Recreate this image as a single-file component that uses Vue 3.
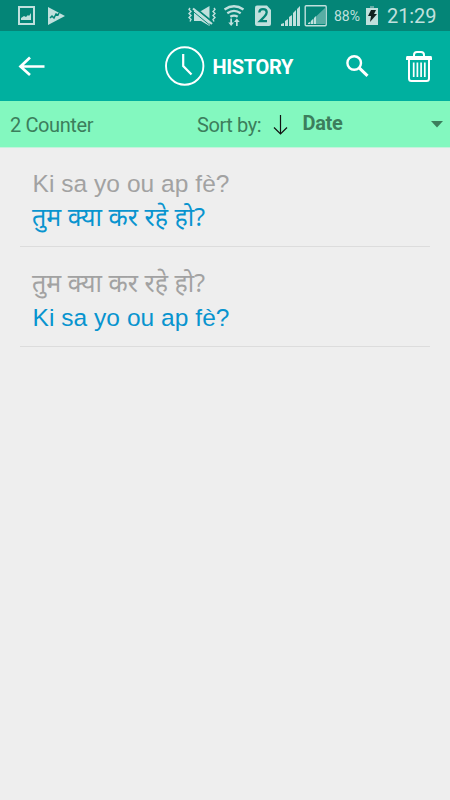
<script setup>
const entries = [
  { source: 'Ki sa yo ou ap fè?', target: 'तुम क्या कर रहे हो?', sourceLang: 'ht', targetLang: 'hi' },
  { source: 'तुम क्या कर रहे हो?', target: 'Ki sa yo ou ap fè?', sourceLang: 'hi', targetLang: 'ht' }
]
</script>

<template>
  <main class="screen">
    <header class="status">
      <svg class="status-left" width="80" height="31" viewBox="0 0 80 31">
        <path class="soft" fill-rule="evenodd" d="M18 6h17v19H18zM20 8v15h13V8z" />
        <path class="soft" d="M21 20v-2l3-2 2 1 2-2 1 1 2-3v7z" />
        <path class="soft" d="M48 7l17 9-17 9z" />
        <path class="cut" d="M50 18l2-2 2 2 2-4 2 1 1-2" />
      </svg>
      <svg class="status-icons" width="144" height="31" viewBox="186 0 144 31">
        <path class="soft" d="M194 11h7l8.500-5v20l-8.500-5h-7z" />
        <path d="M194 7l19 15.500" stroke="#048577" stroke-width="2" />
        <path d="M193 8.500l19 15.500" stroke="#c0e0dd" stroke-width="2.200" />
        <path d="M192 10.500l17 14" stroke="#048577" stroke-width="1" />
        <path class="line" stroke-width="1.400" d="M190 8l-1 1.500 2 2-2 2 2 2-2 2 2 2-1 2M214 8l1 1.500-2 2 2 2-2 2 2 2-2 2 1 2" />
        <path class="line" stroke-width="2.300" d="M224.500 9.500q9.500-6.500 19 0M227.300 13.300q6.700-4.700 13.400 0M230.300 16.800q3.700-2.500 7.400 0" />
        <path class="soft" d="M230.300 18.500h1.700v4h2l-2.850 3.500-2.850-3.500h2zM236 26h1.700v-4h2l-2.850-3.500-2.850 3.500h2z" />
        <path class="soft" d="M257 5.500h10l4 4.500v14q0 2-2 2h-12q-2 0-2-2V7.500q0-2 2-2z" />
        <path d="M259.300 12.500q.2-3.300 3.700-3.300 3.700 0 3.700 3.100 0 1.900-2.200 4.200l-4.500 4.700h7" fill="none" stroke="#048577" stroke-width="2.300" />
        <path class="soft" d="M281 26v-2l3-1v3zM285 26v-5l3-2v7zM289 26v-9l3-2v11zM293 26V13l3-3v16zM297 26V9l3-3v20z" />
        <rect x="305.200" y="5.700" width="21" height="20" rx="1" class="line" stroke-width="1.400" />
        <path d="M308 24L325 8v16z" fill="#58ada4" />
        <path class="soft" d="M308 24v-1l2-1v2zM311 24v-3l2-2v5zM314 24v-6l2-2v8z" />
      </svg>
      <span class="percent">88%</span>
      <svg class="battery" width="14" height="31" viewBox="365 0 14 31">
        <path fill="#65aaa4" d="M370 6h4v3h-4z" />
        <path class="soft" d="M366 8h12v17h-12z" />
        <path fill="#102220" d="M371 10h5l-2 4h3l-7 8 1-6h-3z" />
      </svg>
      <span class="time">21:29</span>
    </header>

    <nav class="toolbar">
      <svg class="back" width="28" height="24" viewBox="18 54 28 24">
        <path d="M20 66.500h24.500M30 57.500l-9.500 9 9.500 8.500" fill="none" stroke="white" stroke-width="2.700" />
      </svg>
      <svg class="clock" width="40" height="40" viewBox="0 0 40 40">
        <circle cx="19.700" cy="20" r="18.700" fill="none" stroke="white" stroke-width="1.900" />
        <path d="M18.200 8v12l8.300 8.600" fill="none" stroke="white" stroke-width="2.200" />
      </svg>
      <h1>HISTORY</h1>
      <svg class="search" width="24" height="24" viewBox="345 54 24 24">
        <circle cx="353.200" cy="63" r="6.800" fill="none" stroke="white" stroke-width="2.400" />
        <path d="M358.200 67.800l8.300 8" stroke="white" stroke-width="3" />
      </svg>
      <svg class="trash" width="28" height="34" viewBox="405 49 28 34">
        <path d="M414 57v-2q0-3 3-3h4q3 0 3 3v2" fill="none" stroke="white" stroke-width="2" />
        <path fill="white" d="M407 56h24q1 0 1 2v2h-26v-2q0-2 1-2z" />
        <path d="M409 60v18.500q0 2.500 2.500 2.500h15q2.500 0 2.500-2.500V60" fill="none" stroke="white" stroke-width="2" />
        <path d="M413.700 62.500V77M417.400 62.500V77M421.100 62.500V77M424.800 62.500V77" stroke="white" stroke-width="1.700" />
      </svg>
    </nav>

    <section class="filters">
      <span class="count">2 Counter</span>
      <span class="sort">Sort by:</span>
      <svg class="down" width="16" height="22" viewBox="0 0 16 22">
        <path d="M7.500 1v19M1 13.500l6.500 6.500 6.500-6.500" fill="none" stroke="#111" stroke-width="1.200" />
      </svg>
      <b>Date</b>
      <svg class="caret" width="12" height="7" viewBox="0 0 12 7"><path d="M0 0h12L6 6.500z" fill="#3c7e5c" /></svg>
    </section>

    <section class="list">
      <article v-for="entry in entries" :key="entry.source" class="entry">
        <p class="source" :class="entry.sourceLang">{{ entry.source }}</p>
        <p class="target" :class="entry.targetLang">{{ entry.target }}</p>
      </article>
    </section>
  </main>
</template>

<style>
body { margin: 0; background: #eee; }
</style>

<style scoped>
.screen { width: 450px; height: 800px; overflow: hidden; background: #eee; font-family: Roboto, sans-serif; }
svg { display: block; flex: none; }
.soft { fill: #c0e0dd; }
.line { fill: none; stroke: #c0e0dd; }
.cut { fill: none; stroke: #048577; stroke-width: 1.5; }
.status { display: flex; height: 31px; background: #048577; color: #c0e0dd; white-space: nowrap; }
.status-icons { margin-left: 106px; }
.percent { width: 31px; margin-left: 4px; font-size: 14px; line-height: 33px; letter-spacing: 0; }
.time { margin-left: 8px; font-size: 20px; line-height: 33px; letter-spacing: -0.1px; }
.toolbar { display: flex; align-items: center; height: 70px; background: #00b09f; color: white; }
.back { margin-left: 18px; }
.clock { margin-left: 119px; }
h1 { width: 82px; margin: 2px 0 0 7.500px; font-size: 20px; line-height: 24px; font-weight: 700; letter-spacing: -0.35px; }
.search { margin-left: 51.500px; }
.trash { margin-left: 35px; }
.filters { display: flex; height: 46px; background: #83f8bf; border-bottom: 1px solid #c4f2dc; color: #3c7e5c; font-size: 20px; line-height: 49px; white-space: nowrap; letter-spacing: -0.4px; }
.count { width: 187px; margin-left: 10px; }
.sort { width: 76px; }
.down { margin-top: 13px; }
b { width: 120px; margin-left: 13.500px; line-height: 45px; letter-spacing: -0.35px; }
.caret { margin: 20px 0 0 8.500px; }
.list { padding: 0 20px; }
.entry { height: 81px; padding: 17px 12px 0; border-bottom: 1px solid #dcdcdc; }
.entry + .entry { height: 81px; padding-top: 18px; }
p { height: 34px; margin: 0; font-size: 25px; line-height: 34px; white-space: nowrap; }
.source { color: #a2a2a2; }
.target { color: #0894cf; }
.ht { padding-left: 0.5px; font-family: "Liberation Sans", sans-serif; font-size: 24.5px; letter-spacing: 0.05px; line-height: 37px; }
.hi { font-family: "Noto Sans", sans-serif; }
</style>
